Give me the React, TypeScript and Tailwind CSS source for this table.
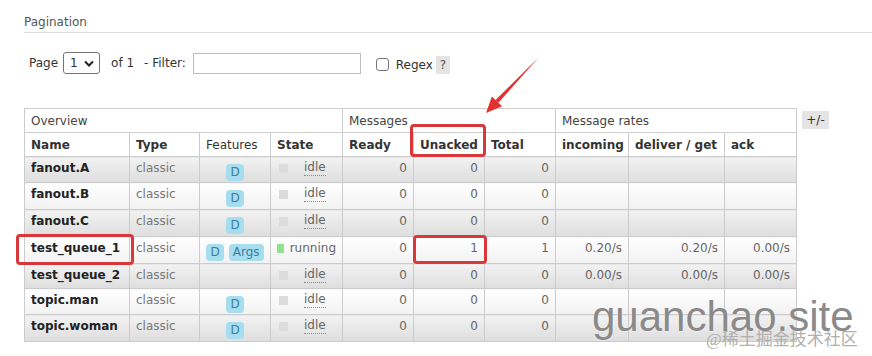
import React from 'react';

type Queue = {
  name: string;
  features: string[];
  state: 'idle' | 'running';
  ready: number;
  unacked: number;
  total: number;
  rates?: [string, string, string];
  h: string;
};

const queues: Queue[] = [
  { name: 'fanout.A', features: ['D'], state: 'idle', ready: 0, unacked: 0, total: 0, h: 'h-[26px]' },
  { name: 'fanout.B', features: ['D'], state: 'idle', ready: 0, unacked: 0, total: 0, h: 'h-[27px]' },
  { name: 'fanout.C', features: ['D'], state: 'idle', ready: 0, unacked: 0, total: 0, h: 'h-[27px]' },
  {
    name: 'test_queue_1',
    features: ['D', 'Args'],
    state: 'running',
    ready: 0,
    unacked: 1,
    total: 1,
    rates: ['0.20/s', '0.20/s', '0.00/s'],
    h: 'h-[27px]',
  },
  {
    name: 'test_queue_2',
    features: [],
    state: 'idle',
    ready: 0,
    unacked: 0,
    total: 0,
    rates: ['0.00/s', '0.00/s', '0.00/s'],
    h: 'h-[25px]',
  },
  { name: 'topic.man', features: ['D'], state: 'idle', ready: 0, unacked: 0, total: 0, h: 'h-[26px]' },
  { name: 'topic.woman', features: ['D'], state: 'idle', ready: 0, unacked: 0, total: 0, h: 'h-[27px]' },
];

const cell = 'border border-[#cccccc] align-top pt-[3px] leading-[16px] px-[6px]';
const head = 'border border-[#cccccc] align-top pt-[4px] leading-[16px] px-[6px] text-left';
const num = `${cell} text-right text-[#666]`;

const Badge = ({ label }: { label: string }) => (
  <span className="inline-block align-top mt-[4px] h-[17px] leading-[17px] px-[4px] rounded-[4px] bg-[#a6def0] text-[#3f7d9c]">
    {label}
  </span>
);

const State = ({ state }: { state: Queue['state'] }) =>
  state === 'running' ? (
    <span className="flex items-center">
      <span className="inline-block w-[9px] h-[9px] bg-[#8fe38f]" />
      <span className="ml-[6px] text-[#666]">running</span>
    </span>
  ) : (
    <span className="flex items-center pl-[2px]">
      <span className="inline-block w-[9px] h-[9px] bg-[#dcdcdc]" />
      <span className="ml-[16px] text-[#666] border-b border-dotted border-[#888] leading-[15px]">idle</span>
    </span>
  );

export default function App() {
  return (
    <div
      className="relative w-[872px] h-[356px] bg-white overflow-hidden text-[12px] text-[#333]"
      style={{ fontFamily: '"DejaVu Sans", Verdana, sans-serif' }}
    >
      {/* section heading */}
      <div className="pt-[14px] ml-[24px]">
        <h2 className="text-[12px] leading-[16px] pb-[2px] text-[#555] border-b border-[#dddddd] font-normal">
          Pagination
        </h2>
      </div>

      {/* paging + filter controls */}
      <div className="flex items-center h-[22px] mt-[19px] ml-[29px]">
        <span>Page</span>
        <div className="ml-[5px] w-[37px] h-[22px] border border-[#767676] rounded-[3px] flex items-center justify-between pl-[6px] pr-[5px]">
          <span>1</span>
          <svg width="10" height="7" viewBox="0 0 10 7">
            <path d="M1 1.5 L5 5.5 L9 1.5" fill="none" stroke="#222" strokeWidth="2" />
          </svg>
        </div>
        <span className="ml-[11px]">of 1</span>
        <span className="ml-[10px]">- Filter:</span>
        <div className="ml-[7px] w-[168px] h-[21px] border border-[#bdbdbd]" />
        <div className="ml-[15px] mt-[2px] w-[13px] h-[13px] border border-[#767676] rounded-[3px]" />
        <span className="ml-[7px] mt-[4px]">Regex</span>
        <span className="ml-[3px] mt-[4px] w-[14px] h-[18px] bg-[#e4e4e4] text-[#555] flex items-center justify-center">?</span>
      </div>

      {/* queues table */}
      <div className="flex items-start mt-[34px] ml-[24px]">
        <table className="border-collapse table-fixed w-[772px]">
          <colgroup>
            <col className="w-[105px]" />
            <col className="w-[70px]" />
            <col className="w-[71px]" />
            <col className="w-[72px]" />
            <col className="w-[71px]" />
            <col className="w-[71px]" />
            <col className="w-[71px]" />
            <col className="w-[73px]" />
            <col className="w-[96px]" />
            <col className="w-[72px]" />
          </colgroup>
          <thead>
            <tr className="h-[24px]">
              <th colSpan={4} className={`${head} font-normal text-[#444]`}>Overview</th>
              <th colSpan={3} className={`${head} font-normal text-[#444]`}>Messages</th>
              <th colSpan={3} className={`${head} font-normal text-[#444]`}>Message rates</th>
            </tr>
            <tr className="h-[24px]">
              <th className={head}>Name</th>
              <th className={head}>Type</th>
              <th className={`${head} font-normal`}>Features</th>
              <th className={head}>State</th>
              <th className={head}>Ready</th>
              <th className={head}>Unacked</th>
              <th className={head}>Total</th>
              <th className={head}>incoming</th>
              <th className={head}>deliver / get</th>
              <th className={head}>ack</th>
            </tr>
          </thead>
          <tbody>
            {queues.map((q, i) => {
              const bg =
                i % 2 === 0
                  ? 'bg-gradient-to-b from-[#f2f2f2] to-[#dedede]'
                  : 'bg-gradient-to-b from-[#ffffff] to-[#f2f2f2]';
              return (
                <tr key={q.name} className={q.h}>
                  <td className={`${cell} ${bg} font-bold text-[#222]`}>{q.name}</td>
                  <td className={`${cell} ${bg} text-[#777]`}>classic</td>
                  <td className={`${cell} ${bg} text-center pt-0`}>
                    {q.features.map((f, j) => (
                      <span key={f} className={j > 0 ? 'ml-[5px]' : ''}>
                        <Badge label={f} />
                      </span>
                    ))}
                  </td>
                  <td className={`${cell} ${bg}`}>
                    <State state={q.state} />
                  </td>
                  <td className={`${num} ${bg}`}>{q.ready}</td>
                  <td className={`${num} ${bg}`}>{q.unacked}</td>
                  <td className={`${num} ${bg}`}>{q.total}</td>
                  <td className={`${num} ${bg}`}>{q.rates?.[0]}</td>
                  <td className={`${num} ${bg}`}>{q.rates?.[1]}</td>
                  <td className={`${num} ${bg}`}>{q.rates?.[2]}</td>
                </tr>
              );
            })}
          </tbody>
        </table>
        <span className="ml-[5px] mt-[3px] w-[27px] h-[18px] bg-[#e4e4e4] flex items-center justify-center">+/-</span>
      </div>

      {/* red callouts */}
      <div className="absolute left-[410px] top-[124px] w-[76px] h-[33px] border-[3px] border-[#d8383a] rounded-[4px]" />
      <div className="absolute left-[16px] top-[234px] w-[118px] h-[31px] border-[3px] border-[#d8383a] rounded-[4px]" />
      <div className="absolute left-[413px] top-[235px] w-[74px] h-[29px] border-[3px] border-[#d8383a] rounded-[4px]" />
      <svg className="absolute left-0 top-0 pointer-events-none" width="872" height="356">
        <polygon points="540.4,55.6 539.6,56.4 495.5,100 498.5,102.8" fill="#e23232" />
        <polygon points="486,113 491.9,96.6 502.1,106.2" fill="#e23232" />
      </svg>

      {/* watermark */}
      <div
        className="absolute left-[592px] top-[296px] text-[42px] leading-none text-[#8a8a8a] whitespace-nowrap"
        style={{ fontFamily: '"Liberation Sans", Arial, sans-serif', textShadow: '0 0 2px rgba(255,255,255,0.8)' }}
      >
        guanchao.site
      </div>
      <div
        className="absolute left-[706px] top-[329px] text-[17px] leading-[22px] text-[#b0b0b0] whitespace-nowrap"
        style={{ fontFamily: '"Liberation Serif", "Noto Sans CJK SC", serif' }}
      >
        @稀土掘金技术社区
      </div>
    </div>
  );
}
